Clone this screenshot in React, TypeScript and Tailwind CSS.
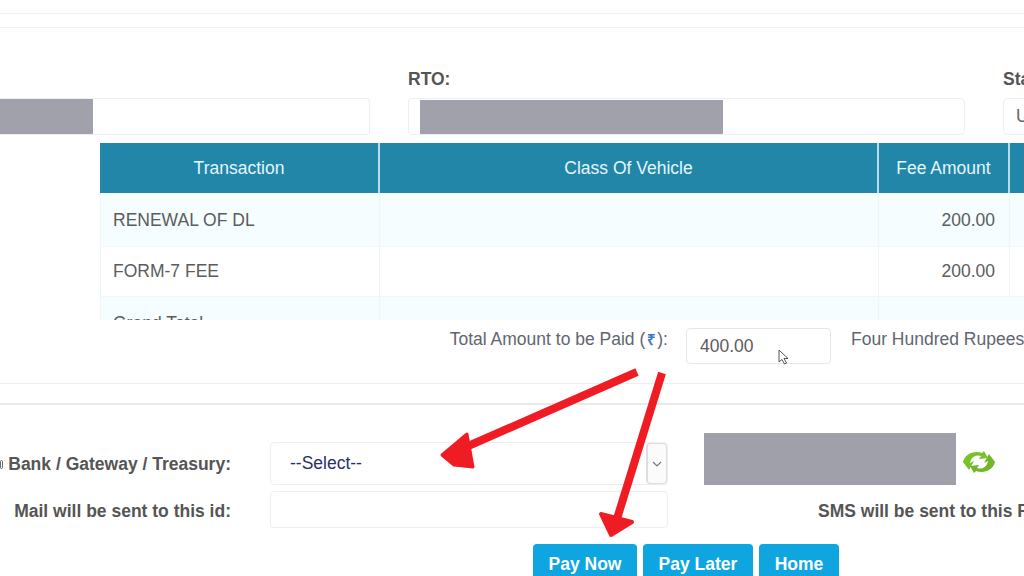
export default function App() {
  const head = "h-[50px] flex items-center justify-center text-[#e3f6fa] border-r-2 border-[#b9dbe6] shrink-0";
  return (
    <div className="relative w-[1024px] h-[576px] overflow-hidden bg-white text-[17.5px] text-[#555] font-['Liberation_Sans',Arial,sans-serif]">
      <div className="w-[1100px]">
        <div className="pt-[13px]">
          <div className="h-[14px] border-t border-[#f1f1f1]" />
          <div className="border-t border-[#f1f1f1]" />
        </div>

        <div className="flex mt-[41px] h-[20px] items-center font-bold text-[#555]">
          <span className="ml-[408px] w-[595px] shrink-0">RTO:</span>
          <span className="whitespace-nowrap">State</span>
        </div>
        <div className="flex mt-[9px] h-[37px]">
          <div className="w-[370px] border border-l-0 border-[#eeeeee] rounded-r flex items-stretch">
            <div className="w-[93px] bg-[#a1a1ac]" />
          </div>
          <div className="ml-[38px] w-[557px] border border-[#eeeeee] rounded pl-[11px] pt-[1px] flex items-stretch">
            <div className="w-[303px] bg-[#a1a1ac]" />
          </div>
          <div className="ml-[38px] w-[90px] border border-[#eeeeee] rounded pl-[12px] flex items-center text-[#666]">U</div>
        </div>

        <div className="ml-[100px] mt-[8px] h-[177px] w-[1000px] overflow-hidden">
          <div className="flex bg-[#2186a8]">
            <div className={`${head} w-[280px]`}>Transaction</div>
            <div className={`${head} w-[499px]`}>Class Of Vehicle</div>
            <div className={`${head} w-[131px]`}>Fee Amount</div>
            <div className="h-[50px] flex-1" />
          </div>
          <div className="flex h-[54px] items-center bg-[#f5fdff] border-b border-[#f0f5f6] text-[#5c5c5c]">
            <div className="w-[280px] h-full flex items-center pl-[12px] pt-[1px] border-x border-[#f0f5f6]">RENEWAL OF DL</div>
            <div className="w-[499px] h-full border-r border-[#f0f5f6]" />
            <div className="w-[131px] h-full flex items-center justify-end pr-[14px] pt-[1px] border-r border-[#f0f5f6]">200.00</div>
          </div>
          <div className="flex h-[50px] items-center bg-white border-b border-[#f0f5f6] text-[#5c5c5c]">
            <div className="w-[280px] h-full flex items-center pl-[12px] border-x border-[#f0f5f6]">FORM-7 FEE</div>
            <div className="w-[499px] h-full border-r border-[#f0f5f6]" />
            <div className="w-[131px] h-full flex items-center justify-end pr-[14px] border-r border-[#f0f5f6]">200.00</div>
          </div>
          <div className="flex h-[50px] bg-[#f5fdff] text-[#5c5c5c]">
            <div className="w-[280px] h-full pl-[12px] pt-[13px] border-x border-[#f0f5f6]">Grand Total</div>
            <div className="w-[499px] h-full border-r border-[#f0f5f6]" />
          </div>
        </div>

        <div className="flex mt-[8px] h-[36px] text-[#5f6670]">
          <div className="w-[668px] text-right -mt-[2px]">
            Total Amount to be Paid (<span className="text-[#3d78c4] text-[15px] font-bold px-[1.5px]">₹</span>):
          </div>
          <div className="ml-[18px] w-[145px] border border-[#e6e6e6] rounded flex items-center pl-[13px] text-[#5c5c5c]">400.00</div>
          <div className="ml-[20px] -mt-[2px] whitespace-nowrap">Four Hundred Rupees Only</div>
        </div>

        <div className="mt-[19px] h-[20px] border-t border-[#eeeeee]" />
        <div className="border-t-2 border-[#e9e9e9]" />

        <div className="flex mt-[28px] h-[52px]">
          <div className="w-[231px] h-[42px] mt-[9px] pt-[3px] font-bold text-[#555] whitespace-nowrap flex justify-end items-center">
            <span className="inline-block w-[9px] h-[9px] rounded-full border border-[#666] mr-[5px]" />
            Bank / Gateway / Treasury:
          </div>
          <div className="ml-[39px] mt-[9px] w-[398px] h-[43px] border border-[#eeeeee] rounded flex items-center pl-[19px] text-[#27306e]">
            <span className="flex-1 -mt-[1px]">--Select--</span>
            <span className="w-[21px] h-[41px] border border-l-2 border-[#dedede] rounded flex items-center justify-center bg-[#fbfbfb]">
              <svg width="10" height="6" viewBox="0 0 10 6" fill="none" stroke="#777" strokeWidth="1.2"><path d="M1 1l4 4 4-4" /></svg>
            </span>
          </div>
          <div className="ml-[36px] w-[252px] h-[52px] bg-[#a0a0aa]" />
          <div className="ml-[6px] mt-[17px] h-[24px]">
            <svg width="34" height="24" viewBox="0 0 34 24">
              <path d="M1 12C3 4 12 0 20 3L22 1L26 8L17 9L19 6C14 4 9 7 8 13L12 11L7 20Z" fill="#7cc02c" />
              <path d="M33 12C31 20 22 24 14 21L12 23L8 16L17 15L15 18C20 20 25 17 26 11L22 13L27 4Z" fill="#6fb628" />
            </svg>
          </div>
        </div>

        <div className="flex mt-[6px] h-[37px]">
          <div className="w-[231px] pt-[4px] flex items-center justify-end font-bold text-[#555] whitespace-nowrap">Mail will be sent to this id:</div>
          <div className="ml-[39px] w-[398px] border border-[#eeeeee] rounded" />
          <div className="ml-[150px] pt-[4px] flex items-center font-bold text-[#555] whitespace-nowrap">SMS will be sent to this Phone</div>
        </div>

        <div className="flex mt-[16px] ml-[533px] gap-[6px] text-white font-bold">
          <button className="w-[104px] h-[40px] bg-[#0ea5e0] rounded pt-[1px]">Pay Now</button>
          <button className="w-[110px] h-[40px] bg-[#0ea5e0] rounded pt-[1px]">Pay Later</button>
          <button className="w-[80px] h-[40px] bg-[#0ea5e0] rounded pt-[1px]">Home</button>
        </div>
      </div>

      <svg className="absolute left-0 top-0 pointer-events-none" width="1024" height="576" viewBox="0 0 1024 576">
        <path d="M637 372L466 447" stroke="#ef1c24" strokeWidth="8" fill="none" />
        <path d="M442 455L467 434L473 467L454 465Z" fill="#ef1c24" stroke="#ef1c24" strokeWidth="3" strokeLinejoin="round" />
        <path d="M662 373L616 522" stroke="#ef1c24" strokeWidth="8" fill="none" />
        <path d="M611 535L601 514L632 522Z" fill="#ef1c24" stroke="#ef1c24" strokeWidth="4" strokeLinejoin="round" />
        <path d="M779 350V362L782 359.5L784.5 364L786.5 363L784 358.5H788Z" fill="#fff" stroke="#555" strokeWidth="1" />
      </svg>
    </div>
  );
}
